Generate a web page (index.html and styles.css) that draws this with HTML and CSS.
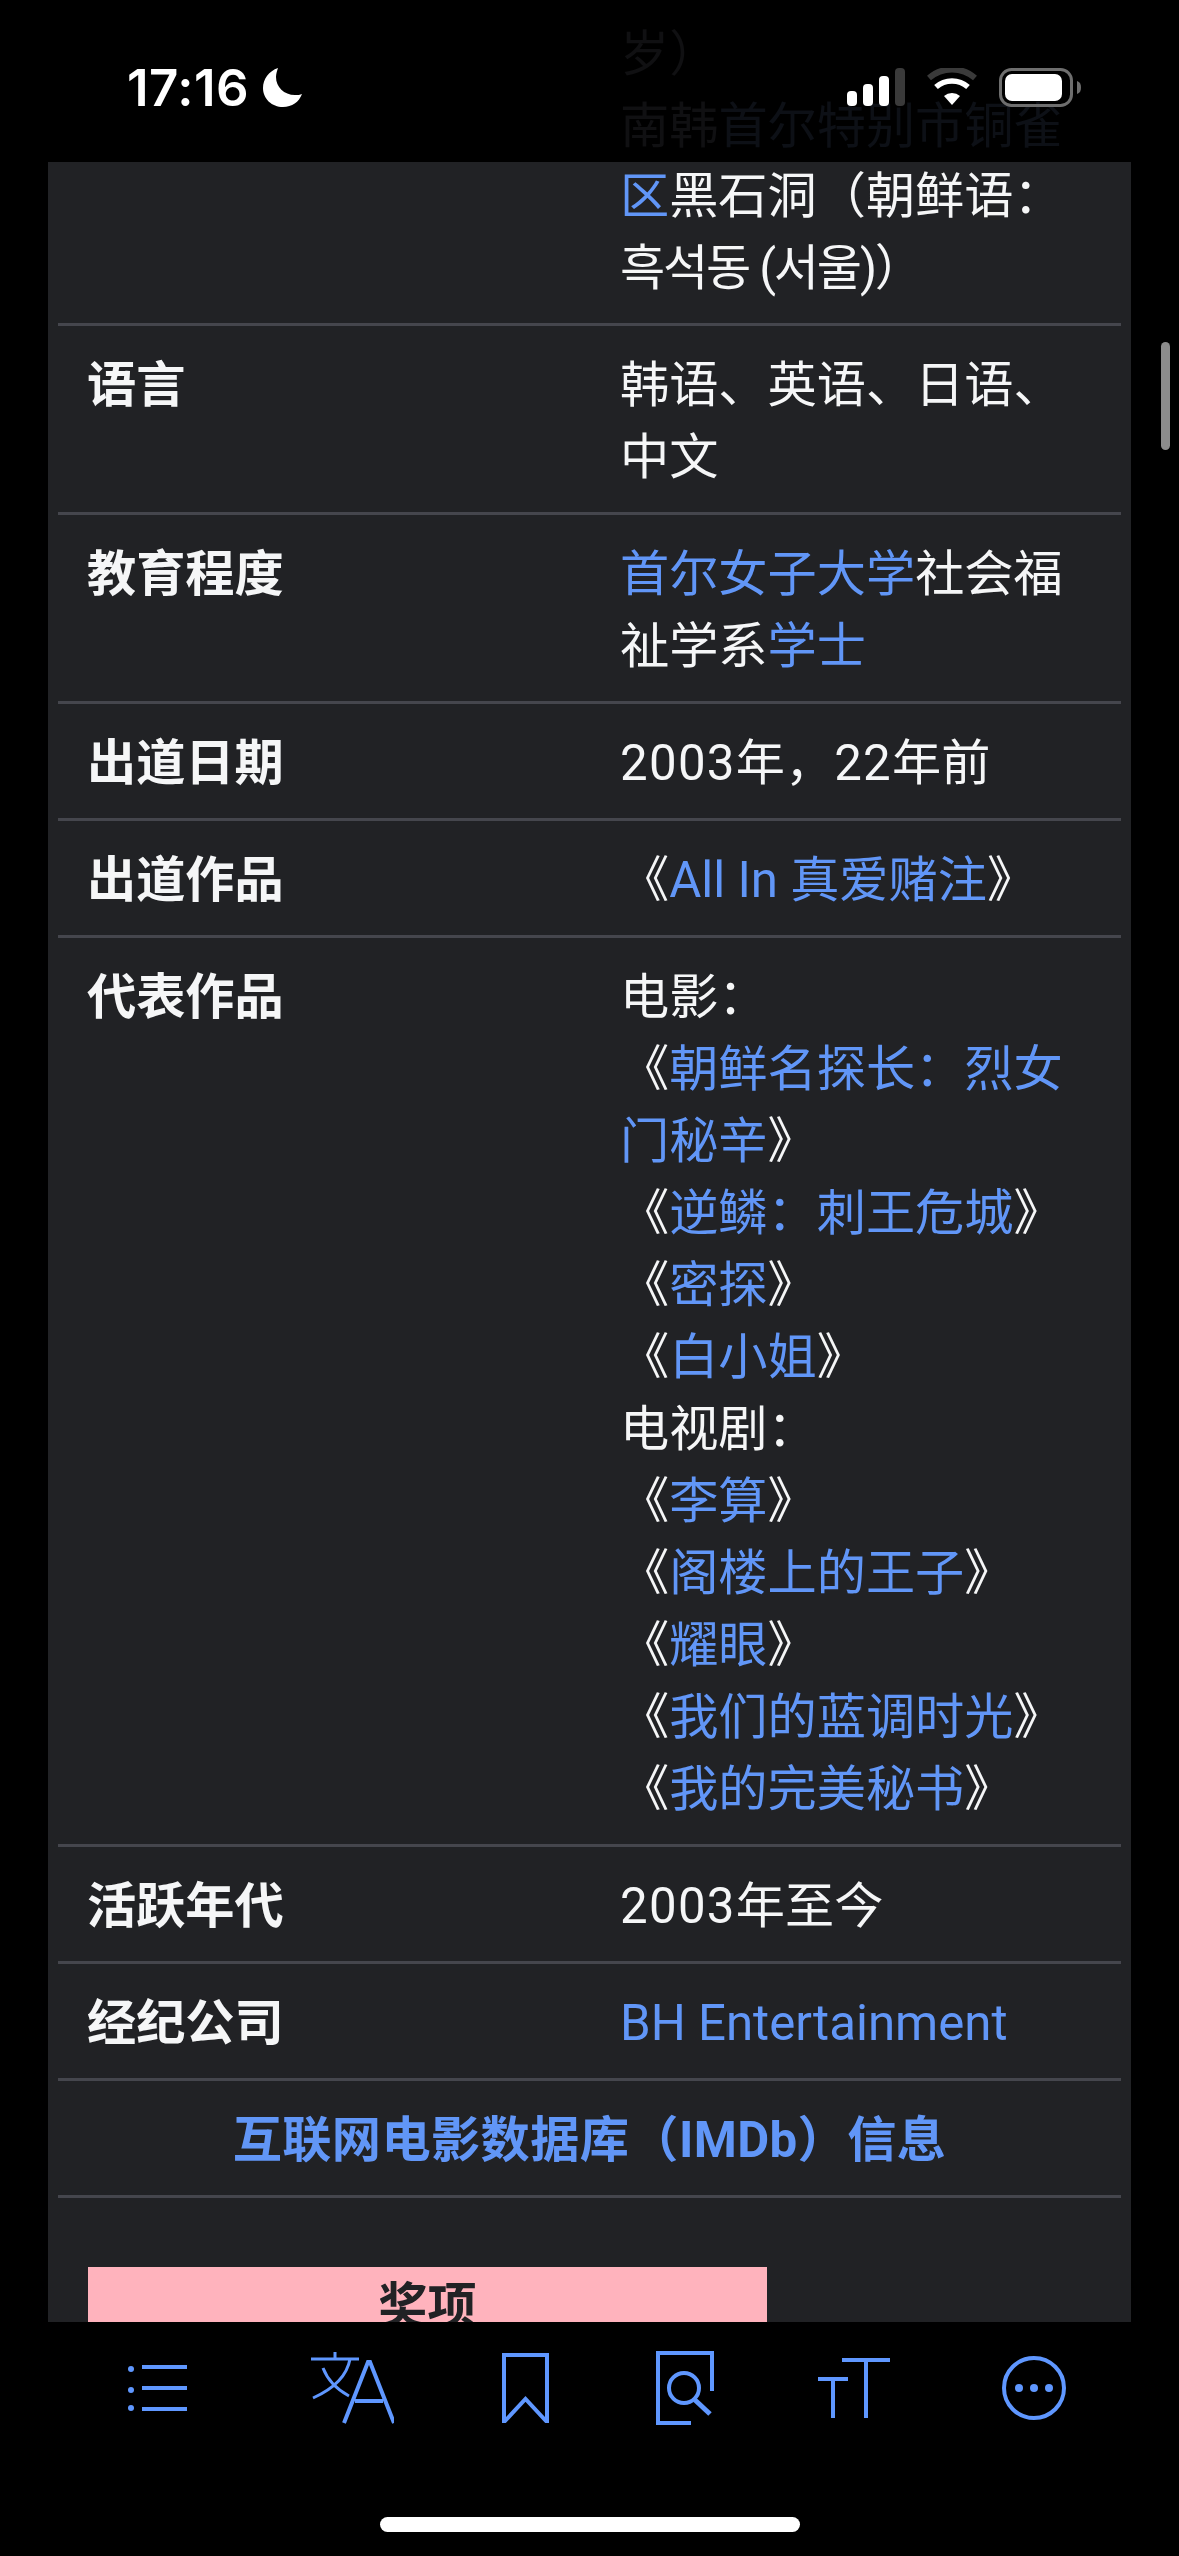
FILE: index.html
```html
<!doctype html>
<html lang="zh">

<head>
  <meta charset="UTF-8" />
  <title>Infobox</title>
  <link rel="stylesheet" href="styles.css">
</head>

<body>
  <main class="page">
    <div class="ghost">
      <div class="ghost-line">岁）</div>
      <div class="ghost-line">南韩<span class="ghost-link">首尔特别市铜雀</span></div>
    </div>

    <section class="panel">
      <div class="row">
        <div class="label"></div>
        <div class="value"><a>区</a>黑石洞（朝鲜语：<br><span class="hangul">흑석동 (서울)</span>）</div>
      </div>
      <div class="row">
        <div class="label">语言</div>
        <div class="value">韩语、英语、日语、<br>中文</div>
      </div>
      <div class="row">
        <div class="label">教育程度</div>
        <div class="value"><a>首尔女子大学</a>社会福<br>祉学系<a>学士</a></div>
      </div>
      <div class="row">
        <div class="label">出道日期</div>
        <div class="value"><span class="num">2003</span>年，<span class="num">22</span>年前</div>
      </div>
      <div class="row">
        <div class="label">出道作品</div>
        <div class="value">《<a>All In 真爱赌注</a>》</div>
      </div>
      <div class="row">
        <div class="label">代表作品</div>
        <div class="value">
          电影：<br>
          《<a>朝鲜名探长：烈女<br>门秘辛</a>》<br>
          《<a>逆鳞：刺王危城</a>》<br>
          《<a>密探</a>》<br>
          《<a>白小姐</a>》<br>
          电视剧：<br>
          《<a>李算</a>》<br>
          《<a>阁楼上的王子</a>》<br>
          《<a>耀眼</a>》<br>
          《<a>我们的蓝调时光</a>》<br>
          《<a>我的完美秘书</a>》
        </div>
      </div>
      <div class="row">
        <div class="label">活跃年代</div>
        <div class="value"><span class="num">2003</span>年至今</div>
      </div>
      <div class="row">
        <div class="label">经纪公司</div>
        <div class="value"><a>BH Entertainment</a></div>
      </div>
      <div class="row row-center">
        <a>互联网电影数据库（IMDb）信息</a>
      </div>
      <div class="awards">
        <div class="awards-head">奖项</div>
      </div>
    </section>
  </main>

  <div class="scrollbar"></div>

  <header class="status">
    <div class="status-left">
      <span class="time">17:16</span>
      <svg class="moon" width="39" height="39" viewBox="0 0 39 39">
        <path d="M15 0C6 3 0 11 0 20c0 11 9 19 20 19 9 0 16-5 19-13-2 1-4 1-7 1C21 27 13 19 13 9c0-3 1-6 2-9z" />
      </svg>
    </div>
    <div class="status-right">
      <svg width="58" height="39" viewBox="0 0 58 39">
        <rect x="0" y="23" width="10" height="15" rx="4" fill="#fff" />
        <rect x="16" y="16" width="10" height="22" rx="4" fill="#fff" />
        <rect x="32" y="8" width="10" height="30" rx="4" fill="#fff" />
        <rect x="48" y="0" width="10" height="38" rx="4" fill="#3a3a3a" />
      </svg>
      <svg width="50" height="39" viewBox="0 0 50 39">
        <path d="M25 37l-8-9a12 12 0 0 1 16 0z" fill="#fff" />
        <path d="M9 19a24 24 0 0 1 32 0" fill="none" stroke="#fff" stroke-width="5.500" />
        <path d="M2 10a35 35 0 0 1 46 0" fill="none" stroke="#3a3a3a" stroke-width="6" />
      </svg>
      <svg width="82" height="39" viewBox="0 0 82 39">
        <rect x="1.500" y="1.500" width="71" height="36" rx="11" fill="none" stroke="#6e6e6e" stroke-width="3" />
        <rect x="6" y="6" width="57" height="27" rx="7" fill="#fff" />
        <path d="M78 13c3 1 4 3 4 6.500s-1 5.500-4 6.500z" fill="#6e6e6e" />
      </svg>
    </div>
  </header>

  <nav class="toolbar">
    <svg class="tool" width="75" height="50" viewBox="0 0 75 50">
      <circle cx="3" cy="6" r="3" />
      <circle cx="3" cy="27" r="3" />
      <circle cx="3" cy="45" r="3" />
      <path class="line" d="M14 4h45M14 25h45M14 46h45" />
    </svg>
    <svg class="tool" width="83" height="72" viewBox="0 0 83 72">
      <path class="thin" d="M24 0v7M0 7h48M39 7c-3 17-17 30-37 39M12 16c5 13 15 22 26 28" />
      <path class="line" d="M33 71L57 10h2L83 71M44 49h28" />
    </svg>
    <svg class="tool" width="47" height="70" viewBox="0 0 47 70">
      <path class="line" d="M2 69V2h43v67L23.500 46z" />
    </svg>
    <svg class="tool" width="58" height="74" viewBox="0 0 58 74">
      <path class="line" d="M56 40V2H2V72H35" />
      <circle class="line" cx="28" cy="37" r="15" />
      <path class="handle" d="M39 49l15 14" />
    </svg>
    <svg class="tool tool-size" width="72" height="60" viewBox="0 0 72 60">
      <path class="line" d="M24 2h48M48 2v58M0 21h30M15 21v39" />
    </svg>
    <svg class="tool" width="64" height="64" viewBox="0 0 64 64">
      <circle class="line" cx="32" cy="32" r="30" />
      <circle cx="17" cy="32" r="4" />
      <circle cx="32" cy="32" r="4" />
      <circle cx="47" cy="32" r="4" />
    </svg>
  </nav>

  <div class="home-bar"></div>
</body>

</html>
```

FILE: styles.css
```css
:root {
  --panel: #212225;
  --line: #45464d;
  --link: #6196f7;
  --tool: #5f97ff;
  --text: #f5f6f7;
}

* {
  margin: 0;
  padding: 0;
  box-sizing: border-box;
}

html,
body {
  width: 1179px;
  height: 2556px;
  background: #000;
  overflow: hidden;
}

body {
  position: relative;
  font-family: "Roboto", "Noto Sans CJK SC", sans-serif;
  font-size: 49.2px;
  line-height: 72px;
  color: var(--text);
}

a {
  color: var(--link);
}

.page {
  padding: 18px 48px 0;
  height: 2322px;
  overflow: hidden;
}

.ghost {
  height: 144px;
  padding-left: 572px;
  color: #101012;
}

.ghost-link {
  color: #0d1016;
}

.panel {
  display: flow-root;
  background: var(--panel);
  padding: 0 10px;
  height: 2160px;
}

.row {
  display: flex;
  padding: 23px 0 19px;
  border-bottom: 3px solid var(--line);
}

.row:first-child {
  margin-top: -2px;
  padding: 0 0 19px;
}

.label {
  width: 562px;
  padding-left: 29px;
  font-weight: 700;
}

.value {
  flex: 1;
  white-space: nowrap;
}

.num {
  letter-spacing: 1.3px;
}

.hangul {
  letter-spacing: -2.2px;
}

.row-center {
  justify-content: center;
  font-weight: 700;
  letter-spacing: 0.4px;
}

.awards {
  padding: 69px 0 0 30px;
}

.awards-head {
  width: 679px;
  height: 120px;
  padding-top: 3px;
  background: #ffb3bd;
  color: #212225;
  font-weight: 700;
  text-align: center;
}

.scrollbar {
  position: absolute;
  top: 342px;
  left: 1161px;
  width: 9px;
  height: 108px;
  border-radius: 5px;
  background: #8c8c8c;
}

.status {
  position: absolute;
  top: 0;
  left: 0;
  width: 100%;
  display: flex;
  justify-content: space-between;
  align-items: center;
  padding: 68px 98px 0 127px;
}

.status-left,
.status-right {
  display: flex;
  align-items: center;
}

.status-left {
  gap: 14px;
}

.status-right {
  gap: 22px;
}

.time {
  font-family: "Inter", sans-serif;
  font-size: 51px;
  line-height: 39px;
  font-weight: 600;
  letter-spacing: 0.5px;
  color: #fff;
}

.moon {
  fill: #fff;
}

.toolbar {
  display: flex;
  align-items: center;
  justify-content: space-between;
  padding: 0 113px 0 128px;
  height: 92px;
  margin-top: 20px;
}

.tool {
  flex: none;
  fill: var(--tool);
}

.tool-size {
  margin: 0 4px 0 -4px;
}

.tool .line,
.tool .thin,
.tool .handle {
  fill: none;
  stroke: var(--tool);
  stroke-width: 4;
}

.tool .thin {
  stroke-width: 3;
}

.tool .handle {
  stroke-width: 5;
}

.home-bar {
  position: absolute;
  top: 2517px;
  left: 380px;
  width: 420px;
  height: 15px;
  border-radius: 8px;
  background: #fff;
}
```
